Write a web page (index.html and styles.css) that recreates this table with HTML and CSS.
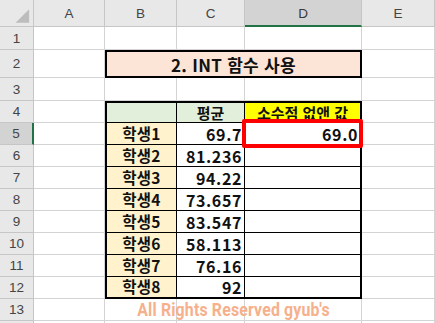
FILE: index.html
```html
<!DOCTYPE html>
<html lang="ko">
<head>
<meta charset="utf-8">
<link rel="stylesheet" href="styles.css">
</head>
<body>
<div class="sheet">
  <div class="corner"><svg width="34" height="27" viewBox="0 0 34 27"><polygon points="30,9 30,23 16,23" fill="#bdbdbd"/></svg></div>
  <div class="ch">A</div><div class="ch">B</div><div class="ch">C</div><div class="ch sel">D</div><div class="ch">E</div>

  <div class="rh">1</div><div class="c"></div><div class="c"></div><div class="c"></div><div class="c"></div><div class="c"></div>

  <div class="rh">2</div><div class="c"></div><div class="title">2. INT 함수 사용</div><div class="c"></div>

  <div class="rh">3</div><div class="c"></div><div class="c"></div><div class="c"></div><div class="c"></div><div class="c"></div>

  <div class="rh">4</div><div class="c"></div>
  <div class="t top left green"></div><div class="t top green center">평균</div><div class="t top right yellow center">소수점 없앤 값</div><div class="c"></div>

  <div class="rh sel">5</div><div class="c"></div>
  <div class="t left name">학생1</div><div class="t num">69.7</div><div class="t right num result">69.0<span class="mark"></span></div><div class="c"></div>

  <div class="rh">6</div><div class="c"></div>
  <div class="t left name">학생2</div><div class="t num">81.236</div><div class="t right num"></div><div class="c"></div>

  <div class="rh">7</div><div class="c"></div>
  <div class="t left name">학생3</div><div class="t num">94.22</div><div class="t right num"></div><div class="c"></div>

  <div class="rh">8</div><div class="c"></div>
  <div class="t left name">학생4</div><div class="t num">73.657</div><div class="t right num"></div><div class="c"></div>

  <div class="rh">9</div><div class="c"></div>
  <div class="t left name">학생5</div><div class="t num">83.547</div><div class="t right num"></div><div class="c"></div>

  <div class="rh">10</div><div class="c"></div>
  <div class="t left name">학생6</div><div class="t num">58.113</div><div class="t right num"></div><div class="c"></div>

  <div class="rh">11</div><div class="c"></div>
  <div class="t left name">학생7</div><div class="t num">76.16</div><div class="t right num"></div><div class="c"></div>

  <div class="rh">12</div><div class="c"></div>
  <div class="t left bottom name">학생8</div><div class="t bottom num">92</div><div class="t right bottom num"></div><div class="c"></div>

  <div class="rh">13</div><div class="c"></div>
  <div class="c wm-host"><span class="wm">All Rights Reserved gyub's</span></div><div class="c"></div><div class="c"></div><div class="c"></div>

  <div class="rh"></div><div class="c"></div><div class="c"></div><div class="c"></div><div class="c"></div><div class="c"></div>
</div>
</body>
</html>
```

FILE: styles.css
```css
html, body {
  margin: 0;
  padding: 0;
  background: #ffffff;
}

.sheet {
  display: grid;
  grid-template-columns: 34px 71px 72px 68px 117px 73px;
  grid-template-rows: 27px 23px 28px 23px repeat(11, 22px);
  width: 435px;
  height: 323px;
  overflow: hidden;
  font-family: "Noto Sans CJK KR", "Noto Sans", sans-serif;
}

.sheet > div {
  box-sizing: border-box;
  border-right: 1px solid #d4d4d4;
  border-bottom: 1px solid #d4d4d4;
  display: flex;
  align-items: center;
  line-height: 1;
}

.corner {
  background: #e8e8e8;
  border-color: #c6c6c6 !important;
}
.corner svg { display: block; }

.ch {
  background: #e8e8e8;
  border-right-color: #c6c6c6 !important;
  border-bottom-color: #c6c6c6 !important;
  justify-content: center;
  font-family: "Liberation Sans", sans-serif;
  font-size: 13.5px;
  color: #444444;
  padding-top: 2px;
}
.ch.sel {
  background: #d3d3d3;
  color: #3a3a3a;
  border-bottom: 2px solid #217346 !important;
}

.rh {
  background: #e8e8e8;
  border-right-color: #c6c6c6 !important;
  border-bottom-color: #c6c6c6 !important;
  justify-content: center;
  font-family: "Liberation Sans", sans-serif;
  font-size: 13.5px;
  color: #444444;
  padding-top: 1px;
}
.rh.sel {
  background: #d3d3d3;
  border-right: 2px solid #217346 !important;
}

.title {
  grid-column: span 3;
  background: #fce4d6;
  border: 2px solid #000000 !important;
  justify-content: center;
  font-weight: 700;
  font-size: 17px;
  color: #111111;
  letter-spacing: 0.3px;
}

.t {
  border-right: 1px solid #000000 !important;
  border-bottom: 1px solid #000000 !important;
  font-weight: 700;
  font-size: 15px;
  color: #111111;
}
.t.top { border-top: 2px solid #000000; }
.t.left { border-left: 2px solid #000000; }
.t.right { border-right: 2px solid #000000 !important; }
.t.bottom { border-bottom: 2px solid #000000 !important; }

.green { background: #e2efda; }
.yellow { background: #ffff00; }
.center { justify-content: center; }

.name {
  background: #fff2cc;
  justify-content: center;
  font-size: 15.5px;
  letter-spacing: 0.3px;
}
.num {
  justify-content: flex-end;
  padding-right: 2px;
  font-size: 16px;
  letter-spacing: 0.6px;
}

.result { position: relative; }
.mark {
  position: absolute;
  left: -3px;
  top: -4px;
  right: -3px;
  bottom: -4px;
  border: 4px solid #ff0000;
  border-radius: 2px;
}

.wm-host { position: relative; overflow: visible; }
.wm {
  position: absolute;
  left: 0;
  top: 0;
  width: 257px;
  height: 22px;
  display: flex;
  align-items: center;
  justify-content: center;
  font-family: Roboto, sans-serif;
  font-weight: 700;
  font-size: 18px;
  color: #f6b08c;
  transform: scaleX(0.88);
  letter-spacing: 0.2px;
  z-index: 2;
}
```
